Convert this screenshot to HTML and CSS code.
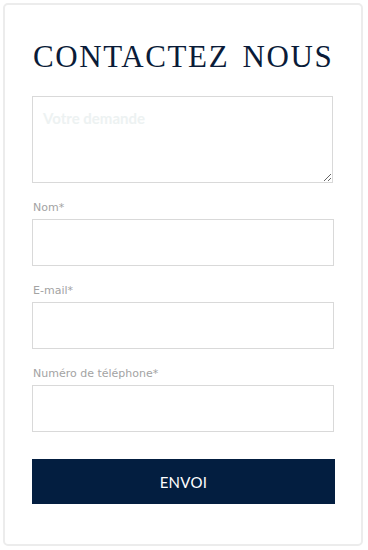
FILE: index.html
```html
<!DOCTYPE html>
<html lang="fr">
<head>
<meta charset="utf-8">
<link rel="stylesheet" href="styles.css">
</head>
<body>
<div class="card">
  <h1 class="title">CONTACTEZ NOUS</h1>
  <form class="form">
    <textarea class="area" placeholder="Votre demande"></textarea>
    <label class="field">
      <span class="label">Nom*</span>
      <input class="input" type="text">
    </label>
    <label class="field">
      <span class="label">E-mail*</span>
      <input class="input" type="email">
    </label>
    <label class="field">
      <span class="label">Numéro de téléphone*</span>
      <input class="input" type="tel">
    </label>
    <button class="btn" type="button">ENVOI</button>
  </form>
</div>
</body>
</html>
```
FILE: styles.css
```css
html, body { margin: 0; padding: 0; background: #fff; }
body { padding: 3px 5px 3px 3px; }
.card {
  box-sizing: border-box;
  width: 360px;
  height: 543px;
  border: 2px solid #ececec;
  border-radius: 5px;
  padding: 34px 27px 0 27px;
}
.title {
  margin: 0 0 21px 1px;
  font-family: "Liberation Serif", "DejaVu Serif", serif;
  font-weight: normal;
  font-size: 31px;
  line-height: 36px;
  letter-spacing: 1.6px;
  word-spacing: 4px;
  color: #0a1b38;
}
.form { display: flex; flex-direction: column; }
.area {
  box-sizing: border-box;
  display: block;
  width: 301px;
  height: 87px;
  border: 1px solid #d9d9d9;
  border-radius: 0;
  padding: 12px 10px;
  margin: 0;
  font-family: Lato, sans-serif;
  font-weight: bold;
  font-size: 15px;
  resize: vertical;
  outline: none;
}
.area::placeholder { color: #edf2f2; }
.field { display: flex; flex-direction: column; margin-top: 18px; }
.label {
  font-family: "DejaVu Sans", sans-serif;
  font-size: 11px;
  line-height: 13px;
  color: #a3a3a3;
  margin: 0 0 5px 1px;
}
.input {
  box-sizing: border-box;
  width: 302px;
  height: 47px;
  border: 1px solid #d9d9d9;
  border-radius: 0;
  margin: 0;
  padding: 0 10px;
  outline: none;
}
.btn {
  margin-top: 27px;
  width: 303px;
  height: 45px;
  border: 0;
  border-radius: 0;
  background: #031e40;
  color: #fff;
  font-family: Lato, sans-serif;
  font-size: 15px;
  letter-spacing: 0.3px;
  cursor: pointer;
}
```
